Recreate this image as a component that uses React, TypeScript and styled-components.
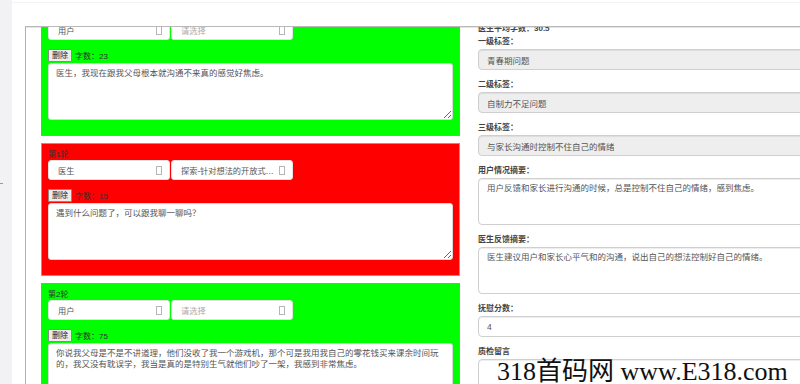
import React from 'react';
import styled, { createGlobalStyle } from 'styled-components';

const GlobalStyle = createGlobalStyle`
  html, body {
    margin: 0;
    padding: 0;
    background: #ffffff;
    overflow: hidden;
  }
  body {
    font-family: 'Liberation Sans', 'Noto Sans CJK SC', sans-serif;
    color: #333;
  }
`;

interface Round {
  title: string;
  role: string;
  tag: string;
  text: string;
  count: number;
  color: string;
}

const rounds: Round[] = [
  {
    title: '第0轮',
    role: '用户',
    tag: '',
    text: '医生，我现在跟我父母根本就沟通不来真的感觉好焦虑。',
    count: 23,
    color: '#00ff00',
  },
  {
    title: '第1轮',
    role: '医生',
    tag: '探索-针对想法的开放式提问',
    text: '遇到什么问题了，可以跟我聊一聊吗？',
    count: 15,
    color: '#ff0000',
  },
  {
    title: '第2轮',
    role: '用户',
    tag: '',
    text: '你说我父母是不是不讲道理，他们没收了我一个游戏机，那个可是我用我自己的零花钱买来课余时间玩的，我又没有耽误学，我当是真的是特别生气就他们吵了一架，我感到非常焦虑。',
    count: 75,
    color: '#00ff00',
  },
];

const App = () => {
  return (
    <>
      <GlobalStyle />
      <StyledPage>
        <StyledSideStrip>
          <StyledStripMark />
        </StyledSideStrip>
        <StyledMain>
          <StyledTopBar />
          <StyledFrame>
            <StyledLeftCol>
              {rounds.map((r, i) => (
                <StyledPanel key={i} bg={r.color}>
                  <StyledRoundTitle>{r.title}</StyledRoundTitle>
                  <StyledSelectRow>
                    <StyledSelect>
                      <StyledSelectText>{r.role}</StyledSelectText>
                      <StyledCaret />
                    </StyledSelect>
                    <StyledSelect>
                      {r.tag ? (
                        <StyledSelectText>{r.tag}</StyledSelectText>
                      ) : (
                        <StyledSelectText muted>请选择</StyledSelectText>
                      )}
                      <StyledCaret />
                    </StyledSelect>
                  </StyledSelectRow>
                  <StyledActionRow>
                    <StyledDeleteButton>删除</StyledDeleteButton>
                    <StyledCount>字数：{r.count}</StyledCount>
                  </StyledActionRow>
                  <StyledTextarea readOnly value={r.text} />
                </StyledPanel>
              ))}
            </StyledLeftCol>

            <StyledRightCol>
              <StyledLabel>医生平均字数：30.5</StyledLabel>
              <StyledGroup>
                <StyledLabel>一级标签：</StyledLabel>
                <StyledInput disabled value="青春期问题" readOnly />
              </StyledGroup>
              <StyledGroup>
                <StyledLabel>二级标签：</StyledLabel>
                <StyledInput disabled value="自制力不足问题" readOnly />
              </StyledGroup>
              <StyledGroup>
                <StyledLabel>三级标签：</StyledLabel>
                <StyledInput disabled value="与家长沟通时控制不住自己的情绪" readOnly />
              </StyledGroup>
              <StyledGroup>
                <StyledLabel>用户情况摘要：</StyledLabel>
                <StyledSummary
                  readOnly
                  value="用户反馈和家长进行沟通的时候，总是控制不住自己的情绪，感到焦虑。"
                />
              </StyledGroup>
              <StyledGroup>
                <StyledLabel>医生反馈摘要：</StyledLabel>
                <StyledSummary
                  readOnly
                  value="医生建议用户和家长心平气和的沟通，说出自己的想法控制好自己的情绪。"
                />
              </StyledGroup>
              <StyledGroup>
                <StyledLabel>抚慰分数：</StyledLabel>
                <StyledInput value="4" readOnly />
              </StyledGroup>
              <StyledGroup>
                <StyledLabel>质检留言</StyledLabel>
                <StyledSummary readOnly value="" />
              </StyledGroup>
            </StyledRightCol>
          </StyledFrame>
        </StyledMain>
        <StyledWatermark>318首码网 www.E318.com</StyledWatermark>
      </StyledPage>
    </>
  );
};

export default App;

const StyledPage = styled.div`
  position: relative;
  display: flex;
  width: 800px;
  height: 384px;
  overflow: hidden;
`;

const StyledSideStrip = styled.div`
  width: 12px;
  flex: none;
  background-color: #f2f2f5;
`;

const StyledStripMark = styled.div`
  width: 3px;
  height: 1px;
  margin-top: 183px;
  background-color: #999;
`;

const StyledMain = styled.div`
  flex: 1;
  display: flex;
  flex-direction: column;
  min-width: 0;
`;

const StyledTopBar = styled.div`
  height: 23px;
  margin-top: 2px;
  border-top: 1px solid #f3f3f3;
  flex: none;
`;

const StyledFrame = styled.div`
  flex: 1;
  display: flex;
  gap: 18px;
  margin-left: 13px;
  padding-left: 15px;
  border-top: 1px solid #b9b9b9;
  border-left: 1px solid #b0b0b0;
  box-shadow: inset 0 1px 0 #e4e4e4;
  overflow: hidden;
`;

const StyledLeftCol = styled.div`
  width: 419px;
  flex: none;
  margin-top: -24px;
`;

const StyledPanel = styled.div<{ bg: string }>`
  background-color: ${(p) => p.bg};
  border: 1px solid #9a9a9a;
  padding: 5px 6px 15px 6px;
  margin-bottom: 7px;
`;

const StyledRoundTitle = styled.div`
  font-size: 8px;
  line-height: 11px;
  color: #333;
`;

const StyledSelectRow = styled.div`
  display: flex;
  gap: 1px;
  margin-bottom: 9px;
`;

const StyledSelect = styled.div`
  width: 122px;
  height: 20px;
  box-sizing: border-box;
  display: flex;
  align-items: center;
  gap: 3px;
  padding: 0 7px 0 9px;
  background-color: #fff;
  border: 1px solid #e2e2e2;
  border-radius: 3px;
`;

const StyledSelectText = styled.span<{ muted?: boolean }>`
  flex: 1;
  min-width: 0;
  font-size: 8.2px;
  color: ${(p) => (p.muted ? '#aaa' : '#555')};
  white-space: nowrap;
  overflow: hidden;
  text-overflow: ellipsis;
`;

const StyledCaret = styled.span`
  width: 4px;
  height: 7px;
  flex: none;
  border: 1px solid #b5b5b5;
`;

const StyledActionRow = styled.div`
  display: flex;
  align-items: center;
  gap: 3px;
  height: 13px;
  margin-bottom: 1px;
`;

const StyledDeleteButton = styled.button`
  height: 13px;
  width: 24px;
  padding: 0;
  font-family: 'Liberation Sans', 'Noto Sans CJK SC', sans-serif;
  font-size: 8px;
  line-height: 11px;
  color: #222;
  background-color: #ececec;
  border: 1px solid #8a8a8a;
  border-radius: 1px;
`;

const StyledCount = styled.span`
  font-size: 8px;
  color: #333;
`;

const StyledTextarea = styled.textarea`
  display: block;
  width: 100%;
  height: 57px;
  box-sizing: border-box;
  margin: 0;
  padding: 4px 7px;
  font-family: 'Liberation Sans', 'Noto Sans CJK SC', sans-serif;
  font-size: 8.5px;
  line-height: 11px;
  color: #555;
  background-color: #fff;
  border: 1px solid #d8d8d8;
  border-radius: 3px;
  outline: none;
  resize: vertical;
`;

const StyledRightCol = styled.div`
  width: 340px;
  flex: none;
  margin-top: -4px;
`;

const StyledGroup = styled.div`
  margin-bottom: 9px;
`;

const StyledLabel = styled.div`
  font-size: 8px;
  line-height: 11px;
  font-weight: bold;
  color: #444;
  margin-bottom: 2px;
`;

const StyledInput = styled.input`
  display: block;
  width: 100%;
  height: 21px;
  box-sizing: border-box;
  margin: 0;
  padding: 0 8px;
  font-family: 'Liberation Sans', 'Noto Sans CJK SC', sans-serif;
  font-size: 8.5px;
  color: #555;
  background-color: #fff;
  border: 1px solid #cfcfcf;
  border-radius: 4px;
  box-shadow: inset 0 1px 1px rgba(0, 0, 0, 0.075);
  outline: none;

  &:disabled {
    background-color: #eeeeee;
    color: #555;
    opacity: 1;
  }
`;

const StyledSummary = styled.textarea`
  display: block;
  width: 100%;
  height: 47px;
  box-sizing: border-box;
  margin: 0;
  padding: 4px 8px;
  font-family: 'Liberation Sans', 'Noto Sans CJK SC', sans-serif;
  font-size: 8.5px;
  line-height: 11px;
  color: #555;
  background-color: #fff;
  border: 1px solid #cfcfcf;
  border-radius: 4px;
  box-shadow: inset 0 1px 1px rgba(0, 0, 0, 0.075);
  outline: none;
  resize: none;
`;

const StyledWatermark = styled.div`
  position: absolute;
  left: 497px;
  top: 357px;
  font-family: 'Liberation Serif', 'Noto Sans CJK SC', serif;
  font-size: 26px;
  line-height: 30px;
  color: #111;
  white-space: nowrap;
  pointer-events: none;
`;
